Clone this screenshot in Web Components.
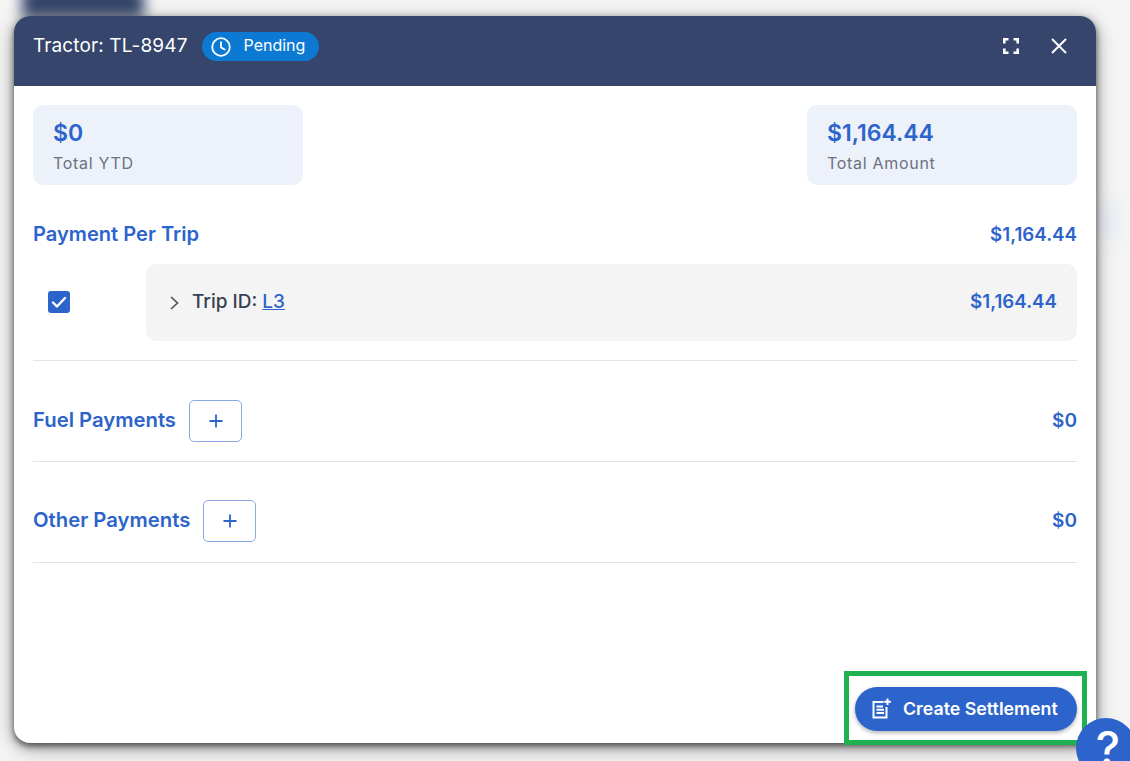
<!DOCTYPE html>
<html><head><meta charset="utf-8"><title>Tractor settlement</title>
<style>
html,body{margin:0;height:100%;overflow:hidden;background:#f5f5f5}
body{font-family:Inter,"Liberation Sans",sans-serif}
</style></head><body>
<settlement-page>
  <settlement-modal title-text="Tractor: TL-8947" status="Pending">
    <div style="display:flex;justify-content:space-between">
      <stat-card amount="$0" label="Total YTD"></stat-card>
      <stat-card amount="$1,164.44" label="Total Amount"></stat-card>
    </div>
    <trip-section></trip-section>
    <payment-row label="Fuel Payments" amount="$0"></payment-row>
    <payment-row label="Other Payments" amount="$0" class="other"></payment-row>
    <create-button slot="footer">Create Settlement</create-button>
  </settlement-modal>
</settlement-page>
<script>
const def=(name,html)=>customElements.define(name,class extends HTMLElement{
  connectedCallback(){ if(this.shadowRoot)return;
    const r=this.attachShadow({mode:'open'}); r.innerHTML=html;
    r.querySelectorAll('[data-a]').forEach(e=>{e.textContent=this.getAttribute(e.dataset.a)||''});
  }
});
def('settlement-page',`<style>
:host{display:block;position:relative;box-sizing:border-box;width:1130px;height:761px;padding:16px 34px 18px 14px;overflow:hidden}
.blur{position:absolute;left:22px;top:-14px;width:122px;height:32px;background:#35456b;filter:blur(7px)}
.faint{position:absolute;left:1094px;top:205px;width:24px;height:34px;background:#e9edf5;filter:blur(8px)}
.help{position:absolute;left:1076px;top:718px;width:60px;height:60px;border-radius:50%;background:#2c64cb;color:#fff;font:500 46px/60px Inter,sans-serif;text-align:center;text-indent:4px}
.wrap{position:relative;height:100%}
</style><div class="blur"></div><div class="faint"></div><div class="wrap"><slot></slot></div><div class="help">?</div>`);
def('settlement-modal',`<style>
:host{display:flex;flex-direction:column;height:100%;background:#fff;border-radius:16px;box-shadow:0 3px 6px rgba(0,0,0,.55),0 4px 16px rgba(0,0,0,.35),0 8px 30px rgba(0,0,0,.1);overflow:hidden}
header{height:70px;flex:none;background:#35456b;color:#fff;display:flex;align-items:flex-start;box-sizing:border-box;padding:16px 29px 0 19px}
h1{margin:0;font-weight:400;font-size:19px;line-height:27px;letter-spacing:.12px;white-space:nowrap}
.badge{margin-left:14px;height:29px;box-sizing:border-box;padding:0 14px 0 8px;border-radius:15px;background:#0c79d3;display:flex;align-items:center;gap:12px;font-size:16px;font-weight:400}
.badge span{margin-top:-3px}
.sp{flex:1}
.ic{display:flex;gap:32px;margin-top:6px;align-items:center}
svg{display:block}
main{flex:1;padding:19px 19px 0;display:flex;flex-direction:column;min-height:0}
footer{display:flex;justify-content:flex-end;padding:0 19px 12px}
.hl{position:absolute;left:830px;top:655px;width:243px;height:74px;box-sizing:border-box;border:5px solid #1fb04f;pointer-events:none}
</style>
<header><h1 data-a="title-text"></h1>
<span class="badge"><svg width="22" height="22" viewBox="0 0 22 22" fill="none" stroke="#fff" stroke-width="1.8" stroke-linecap="round" stroke-linejoin="round"><circle cx="11" cy="11" r="8.8"/><path d="M11 6.2V11.4l3.6 2.1"/></svg><span data-a="status"></span></span>
<span class="sp"></span>
<span class="ic"><svg width="16" height="16" viewBox="0 0 16 16" fill="none" stroke="#fff" stroke-width="2.6"><path d="M1.3 5.5V1.3h4.2M10.5 1.3h4.2v4.2M14.7 10.5v4.2h-4.2M5.5 14.7H1.3v-4.2"/></svg>
<svg width="16" height="16" viewBox="0 0 16 16" fill="none" stroke="#fff" stroke-width="2"><path d="M1 1l14 14M15 1L1 15"/></svg></span></header>
<main><slot></slot></main>
<footer><slot name="footer"></slot></footer>
<div class="hl"></div>`);
def('stat-card',`<style>
:host{display:block;width:270px;height:80px;box-sizing:border-box;background:#edf1fa;border-radius:10px;padding:13px 20px}
.a{color:#2c64cb;font-size:23px;font-weight:600;line-height:31px}
.l{color:#6b7280;font-size:16px;line-height:24px;margin-top:2px;letter-spacing:.7px}
</style><div class="a" data-a="amount"></div><div class="l" data-a="label"></div>`);
def('trip-section',`<style>
:host{display:block;border-bottom:1px solid #e3e4e6;padding-bottom:19px}
.h{display:flex;justify-content:space-between;align-items:center;margin-top:35px;height:28px;color:#2c64cb;font-weight:600;font-size:20.1px}
.amt{font-size:18.7px;font-weight:600}
.row{display:flex;align-items:center;margin-top:16px}
.cb{width:22px;height:22px;margin-left:15px;margin-right:76px;border-radius:3px;background:#2c64cb;display:flex;align-items:center;justify-content:center;margin-top:-1px}
.card{flex:1;height:77px;background:#f4f4f4;border-radius:10px;display:flex;align-items:center;padding:0 20px 2px 23px;box-sizing:border-box}
.t{margin-left:12px;color:#374151;font-size:19px;font-weight:500}
a{color:#2c64cb;text-decoration:underline}
.sp{flex:1}
.card .amt{color:#2c64cb}
</style>
<div class="h"><span>Payment Per Trip</span><span class="amt">$1,164.44</span></div>
<div class="row"><span class="cb"><svg width="16" height="14" viewBox="0 0 16 14" fill="none" stroke="#fff" stroke-width="2.4" stroke-linecap="round" stroke-linejoin="round"><path d="M2 7.5l4 4L14 3"/></svg></span>
<div class="card"><svg width="11" height="16" viewBox="0 0 11 16" fill="none" stroke="#4b5563" stroke-width="1.7" style="display:block;margin-top:2px"><path d="M2 2l6.5 6L2 14"/></svg><span class="t">Trip ID: <a href="#" >L3</a></span><span class="sp"></span><span class="amt">$1,164.44</span></div></div>`);
def('payment-row',`<style>
:host{display:block;border-bottom:1px solid #e3e4e6;height:101px;box-sizing:border-box;color:#2c64cb;font-weight:600}
.r{display:flex;align-items:center;box-sizing:border-box;padding-top:39px}
:host(.other) .r{padding-top:38px}
.l{font-size:20.3px;margin-bottom:3px}
button{margin-left:13px;width:53px;height:42px;border:1px solid #8ba9e3;border-radius:5px;background:#fff;padding:0;display:flex;align-items:center;justify-content:center}
.a{margin-left:auto;font-size:19px;margin-bottom:1px}
</style><div class="r"><span class="l" data-a="label"></span><button><svg width="14" height="14" viewBox="0 0 14 14" stroke="#2c64cb" stroke-width="1.8"><path d="M7 .5v13M.5 7h13"/></svg></button><span class="a" data-a="amount"></span></div>`);
def('create-button',`<style>
:host{display:flex;align-items:center;box-sizing:border-box;width:222px;height:44px;border-radius:22px;background:#2c64cb;color:#fff;font-size:17.8px;font-weight:600;padding:0 0 2px 16px;gap:11px;white-space:nowrap;box-shadow:0 2px 4px rgba(0,0,0,.3)}
</style><svg width="21" height="21" viewBox="0 0 21 21" fill="none" stroke="#fff" stroke-width="2"><path d="M12.5 4H2.5v15.5h13V9"/><path d="M5.5 8.5h6.5M5.5 11.7h7.5M5.5 15h7.5"/><path d="M16.5 0.5v6.5M13.2 3.7h6.6"/></svg><slot></slot>`);
</script>
</body></html>
